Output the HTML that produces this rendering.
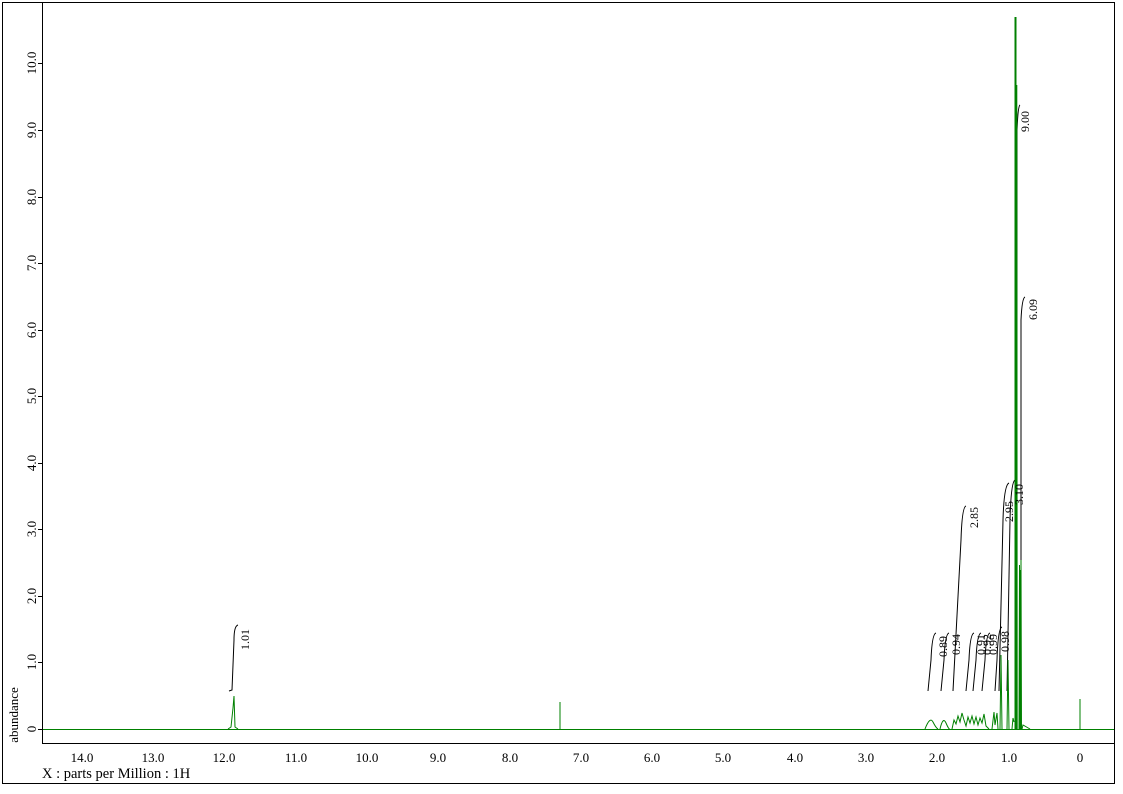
<!DOCTYPE html>
<html><head><meta charset="utf-8"><style>
html,body{margin:0;padding:0;background:#fff;}
svg{display:block;font-family:"Liberation Serif",serif;}
</style></head><body>
<svg width="1123" height="794" viewBox="0 0 1123 794" xmlns="http://www.w3.org/2000/svg">
<rect x="2.5" y="2.5" width="1112" height="781" fill="none" stroke="#000" stroke-width="1"/>
<line x1="42.5" y1="3" x2="42.5" y2="744" stroke="#000"/>
<g stroke="#000">
<line x1="38" y1="729.5" x2="42" y2="729.5"/><line x1="38" y1="662.5" x2="42" y2="662.5"/><line x1="38" y1="596.5" x2="42" y2="596.5"/><line x1="38" y1="529.5" x2="42" y2="529.5"/><line x1="38" y1="463.5" x2="42" y2="463.5"/><line x1="38" y1="396.5" x2="42" y2="396.5"/><line x1="38" y1="330.5" x2="42" y2="330.5"/><line x1="38" y1="263.5" x2="42" y2="263.5"/><line x1="38" y1="197.5" x2="42" y2="197.5"/><line x1="38" y1="130.5" x2="42" y2="130.5"/><line x1="38" y1="63.5" x2="42" y2="63.5"/>
</g>
<g stroke="#000" id="ymin"></g>
<g font-size="13" fill="#000">
<text transform="translate(36,729) rotate(-90)" text-anchor="middle">0</text>
<text transform="translate(36,662) rotate(-90)" text-anchor="middle">1.0</text>
<text transform="translate(36,596) rotate(-90)" text-anchor="middle">2.0</text>
<text transform="translate(36,529) rotate(-90)" text-anchor="middle">3.0</text>
<text transform="translate(36,463) rotate(-90)" text-anchor="middle">4.0</text>
<text transform="translate(36,396) rotate(-90)" text-anchor="middle">5.0</text>
<text transform="translate(36,330) rotate(-90)" text-anchor="middle">6.0</text>
<text transform="translate(36,263) rotate(-90)" text-anchor="middle">7.0</text>
<text transform="translate(36,197) rotate(-90)" text-anchor="middle">8.0</text>
<text transform="translate(36,130) rotate(-90)" text-anchor="middle">9.0</text>
<text transform="translate(36,63) rotate(-90)" text-anchor="middle">10.0</text>
<text transform="translate(18,715) rotate(-90)" text-anchor="middle">abundance</text>
</g>
<line x1="42" y1="743.5" x2="1115" y2="743.5" stroke="#000"/>
<g font-size="13" fill="#000" text-anchor="middle">
<text x="82" y="762">14.0</text><text x="153" y="762">13.0</text><text x="224" y="762">12.0</text><text x="296" y="762">11.0</text><text x="367" y="762">10.0</text><text x="438" y="762">9.0</text><text x="510" y="762">8.0</text><text x="581" y="762">7.0</text><text x="652" y="762">6.0</text><text x="723" y="762">5.0</text><text x="795" y="762">4.0</text><text x="866" y="762">3.0</text><text x="937" y="762">2.0</text><text x="1009" y="762">1.0</text><text x="1080" y="762">0</text>
<text x="42" y="778" text-anchor="start" font-size="14.5">X : parts per Million : 1H</text>
</g>
<g id="xt" stroke="#000"></g>
<script>
var g=document.getElementById('xt'),s='';
for(var p=-0.5;p<=14.6;p+=0.2){var x=1080-71.3*p;if(x<44||x>1114)continue;var maj=Math.abs(p-Math.round(p))<0.01;s+='<line x1="'+x.toFixed(1)+'" y1="744" x2="'+x.toFixed(1)+'" y2="'+(maj?749:747)+'"/>';}
g.innerHTML=s;
var h=document.getElementById('ymin'),t='';
for(var v=-0.2;v<=10.8;v+=0.2){var y=729.5-66.6*v;if(y<4||y>744)continue;t+='<line x1="40" y1="'+y.toFixed(1)+'" x2="42" y2="'+y.toFixed(1)+'"/>';}
h.innerHTML=t;
</script>
<g stroke="#000" stroke-width="1" fill="none">
<path d="M229 691 L232 690 L234 640 Q234 626 238 625"/>
<path d="M928 691 L931 660 Q932 634 936 633"/>
<path d="M941 691 L944 660 Q945 634 949 633"/>
<path d="M953 691 L961 540 Q962 507 966 506"/>
<path d="M966 691 L969 660 Q970 634 974 633"/>
<path d="M973 691 L976 660 Q977 634 981 633"/>
<path d="M982 691 L985 660 Q986 634 990 633"/>
<path d="M995 691 L997 660 Q998 628 1002 627"/>
<path d="M999 691 L1003 520 Q1004 485 1009 483"/>
<path d="M1007 691 L1010 520 Q1011 482 1015 480"/>
<path d="M1017 690 L1017 130 Q1018 106 1020 105"/>
<path d="M1021 691 L1021 320 Q1022 298 1025 297"/>
</g>
<g stroke="#008000" stroke-width="1" fill="none">
<line x1="43" y1="729.5" x2="1114" y2="729.5"/>
<path d="M228 729 L231 727 L233 708 L234 696 L235 727 L238 729"/>
<line x1="560" y1="729" x2="560" y2="702"/>
<line x1="1080" y1="729" x2="1080" y2="699"/>
<path d="M925 729 Q930 716 933 722 T938 729 M940 729 Q943 716 946 723 T950 729"/>
<path d="M952 729 L954 720 L956 724 L958 716 L960 722 L962 713 L964 720 L966 726 L968 717 L970 723 L972 716 L974 724 L976 717 L978 725 L980 718 L982 723 L984 714 L986 726 L989 729"/>
<path d="M992 729 L994 712 L995 725 L997 713 L998 729"/>
<path d="M1000 729 L1001 655 L1002 729 M1007 729 L1008 660 L1009 729"/>
<path d="M1012 729 L1013 718 L1014 722"/>
<path d="M1015 729 L1015.5 17 L1016 729 M1016.5 729 L1016.8 85 L1017.2 729"/>
<path d="M1019 729 L1019.5 565 L1020 729 M1020.5 729 L1021 560 L1021.5 729 M1022 729 L1023 725 L1030 729"/>
</g>
<g stroke="#008000" stroke-width="2"><line x1="1015.5" y1="17" x2="1015.5" y2="720"/><line x1="1020" y1="570" x2="1020" y2="720"/></g>
<g font-size="12" fill="#000">
<text transform="translate(249,650) rotate(-90)">1.01</text>
<text transform="translate(947,657) rotate(-90)">0.89</text>
<text transform="translate(960,655) rotate(-90)">0.94</text>
<text transform="translate(978,528) rotate(-90)">2.85</text>
<text transform="translate(985,655) rotate(-90)">0.91</text>
<text transform="translate(991,655) rotate(-90)">0.92</text>
<text transform="translate(997,655) rotate(-90)">0.99</text>
<text transform="translate(1009,652) rotate(-90)">0.98</text>
<text transform="translate(1013,522) rotate(-90)">2.95</text>
<text transform="translate(1023,505) rotate(-90)">3.10</text>
<text transform="translate(1029,132) rotate(-90)">9.00</text>
<text transform="translate(1037,320) rotate(-90)">6.09</text>
</g>
</svg>
</body></html>
